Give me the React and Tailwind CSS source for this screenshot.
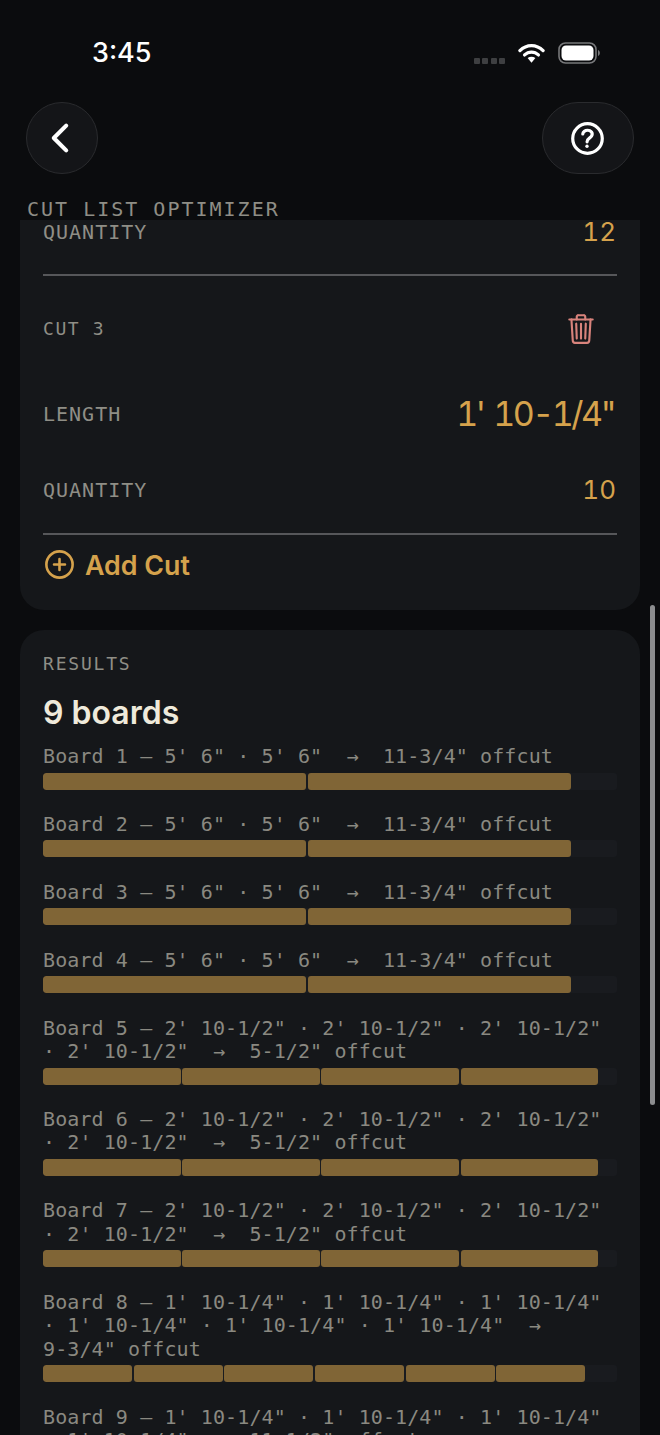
import React from "react";
import { IoChevronBack, IoHelpCircleOutline, IoTrashOutline, IoAddCircleOutline } from "react-icons/io5";

const mono = "font-['DejaVu_Sans_Mono','Liberation_Mono',monospace]";
const sans = "font-['Inter','Noto_Sans',sans-serif]";

const boards = [
  { t: `Board 1 — 5' 6" · 5' 6"  →  11-3/4" offcut`, seg: 2, w: "w-[263px]" },
  { t: `Board 2 — 5' 6" · 5' 6"  →  11-3/4" offcut`, seg: 2, w: "w-[263px]" },
  { t: `Board 3 — 5' 6" · 5' 6"  →  11-3/4" offcut`, seg: 2, w: "w-[263px]" },
  { t: `Board 4 — 5' 6" · 5' 6"  →  11-3/4" offcut`, seg: 2, w: "w-[263px]" },
  { t: `Board 5 — 2' 10-1/2" · 2' 10-1/2" · 2' 10-1/2"\n· 2' 10-1/2"  →  5-1/2" offcut`, seg: 4, w: "w-[137.5px]" },
  { t: `Board 6 — 2' 10-1/2" · 2' 10-1/2" · 2' 10-1/2"\n· 2' 10-1/2"  →  5-1/2" offcut`, seg: 4, w: "w-[137.5px]" },
  { t: `Board 7 — 2' 10-1/2" · 2' 10-1/2" · 2' 10-1/2"\n· 2' 10-1/2"  →  5-1/2" offcut`, seg: 4, w: "w-[137.5px]" },
  { t: `Board 8 — 1' 10-1/4" · 1' 10-1/4" · 1' 10-1/4"\n· 1' 10-1/4" · 1' 10-1/4" · 1' 10-1/4"  →\n9-3/4" offcut`, seg: 6, w: "w-[89px]" },
  { t: `Board 9 — 1' 10-1/4" · 1' 10-1/4" · 1' 10-1/4"\n· 1' 10-1/4"  →  11-1/2" offcut`, seg: 4, w: "w-[89px]" },
];

function Row({ label, value, big }) {
  return (
    <div className="flex items-center justify-between">
      <span className={`${mono} text-[20px] leading-[24px] tracking-[1px] text-[#8f8e86]`}>{label}</span>
      <span className={`${sans} tabular-nums ${big ? "text-[34px] leading-[40px] tracking-[-2.5px] [word-spacing:3px] mr-[3px]" : "text-[26px] leading-[32px] mr-[1px]"} text-[#d5a24c]`}>{value}</span>
    </div>
  );
}

function Board({ t, seg, w }) {
  return (
    <div className="mb-[23.4px]">
      <div className={`${mono} text-[20px] leading-[23.5px] tracking-[0.1px] text-[#8a8981] whitespace-pre-wrap`}>{t}</div>
      <div className="mt-[4px] h-[17px] rounded-[3px] bg-[#191b1f] flex gap-[1.7px] overflow-hidden">
        {Array.from({ length: seg }).map((_, i) => (
          <div key={i} className={`${w} h-full rounded-[3px] bg-[#806536]`} />
        ))}
      </div>
    </div>
  );
}

export default function App() {
  return (
    <div className="relative w-[660px] h-[1435px] overflow-hidden bg-[#0b0c0e]">
      {/* status bar */}
      <div className="h-[102px] flex items-start justify-between pt-[36px] pl-[92px] pr-[58px]">
        <span className={`${sans} text-[27px] leading-[34px] font-medium text-white`}>3:45</span>
        <div className="flex items-center mt-[6px]">
          <div className="flex gap-[2.5px] mt-[16px] mr-[13px]">
            <i className="block w-[6px] h-[6px] rounded-[1px] bg-[#3e3f41]" />
            <i className="block w-[6px] h-[6px] rounded-[1px] bg-[#3e3f41]" />
            <i className="block w-[6px] h-[6px] rounded-[1px] bg-[#3e3f41]" />
            <i className="block w-[6px] h-[6px] rounded-[1px] bg-[#3e3f41]" />
          </div>
          <svg width="27" height="22" viewBox="0 0 28 22" className="mr-[13px]">
            <path d="M2 8.5 C9 1.5 19 1.5 26 8.5" stroke="#fff" strokeWidth="3.4" fill="none" strokeLinecap="round" />
            <path d="M6.8 13 C11 9 17 9 21.2 13" stroke="#fff" strokeWidth="3.4" fill="none" strokeLinecap="round" />
            <path d="M10 16.3 L14 21 L18 16.3 C15.5 14.4 12.5 14.4 10 16.3 Z" fill="#fff" />
          </svg>
          <svg width="44" height="22" viewBox="0 0 44 22">
            <rect x="1" y="1" width="37" height="20" rx="6.5" fill="none" stroke="#77787a" strokeWidth="1.6" />
            <rect x="3.5" y="3.5" width="32" height="15" rx="4.5" fill="#fff" />
            <path d="M40 8 C42.5 8.8 42.5 13.2 40 14 Z" fill="#77787a" />
          </svg>
        </div>
      </div>

      {/* nav */}
      <div className="flex items-center justify-between pl-[26px] pr-[26px]">
        <button className="w-[72px] h-[72px] rounded-full bg-[#141518] border border-[#2a2b2e] flex items-center justify-center text-white">
          <IoChevronBack size={44} className="-ml-[5px]" />
        </button>
        <button className="w-[92px] h-[72px] rounded-full bg-[#141518] border border-[#2a2b2e] flex items-center justify-center text-white">
          <IoHelpCircleOutline size={43} className="-ml-[1px] [&_path]:[stroke-width:38px]" />
        </button>
      </div>

      {/* title */}
      <div className={`${mono} pl-[27px] mt-[24px] h-[22px] text-[20px] leading-[23px] tracking-[2px] text-[#8f8e86]`}>CUT LIST OPTIMIZER</div>

      {/* scrolled content */}
      <div className="mx-[20px]">
        <div className="bg-[#15171a] rounded-b-[24px] px-[23px] h-[390px] flex flex-col">
          <div className="-mt-[4px] h-[60px] border-b-2 border-[#56575a]">
            <Row label="QUANTITY" value="12" />
          </div>
          <div className="flex items-center justify-between h-[106px] pr-[19px]">
            <span className={`${mono} text-[18px] leading-[22px] tracking-[1.6px] text-[#8f8e86]`}>CUT 3</span>
            <IoTrashOutline size={34} className="text-[#d8837c]" />
          </div>
          <div className="h-[44px] flex flex-col justify-center mt-[10px]"><Row label="LENGTH" value={`1' 10-1/4"`} big /></div>
          <div className="h-[32px] mt-[38px] flex flex-col justify-center"><Row label="QUANTITY" value="10" /></div>
          <div className="mt-[27px] border-t-2 border-[#56575a]" />
          <div className={`flex items-center mt-[12px] ${sans} text-[#d5a24c] text-[26.8px] leading-[32px] font-semibold`}>
            <IoAddCircleOutline size={35} className="-ml-[1px] [&_path]:[stroke-width:38px]" />
            <span className="ml-[8px]">Add Cut</span>
          </div>
        </div>

        <div className="mt-[20px] bg-[#15171a] rounded-t-[24px] px-[23px] pt-[24px]">
          <div className={`${mono} text-[18px] leading-[20px] tracking-[1.8px] text-[#8f8e86]`}>RESULTS</div>
          <div className={`${sans} mt-[19px] text-[32px] leading-[40px] font-semibold text-[#efeadb]`}>9 boards</div>
          <div className="mt-[12px]">
            {boards.map((b) => <Board key={b.t} {...b} />)}
          </div>
        </div>
      </div>

      {/* scroll indicator */}
      <div className="absolute left-[650px] top-[605px] w-[5px] h-[500px] rounded-full bg-[#8c8d8f]" />
    </div>
  );
}
